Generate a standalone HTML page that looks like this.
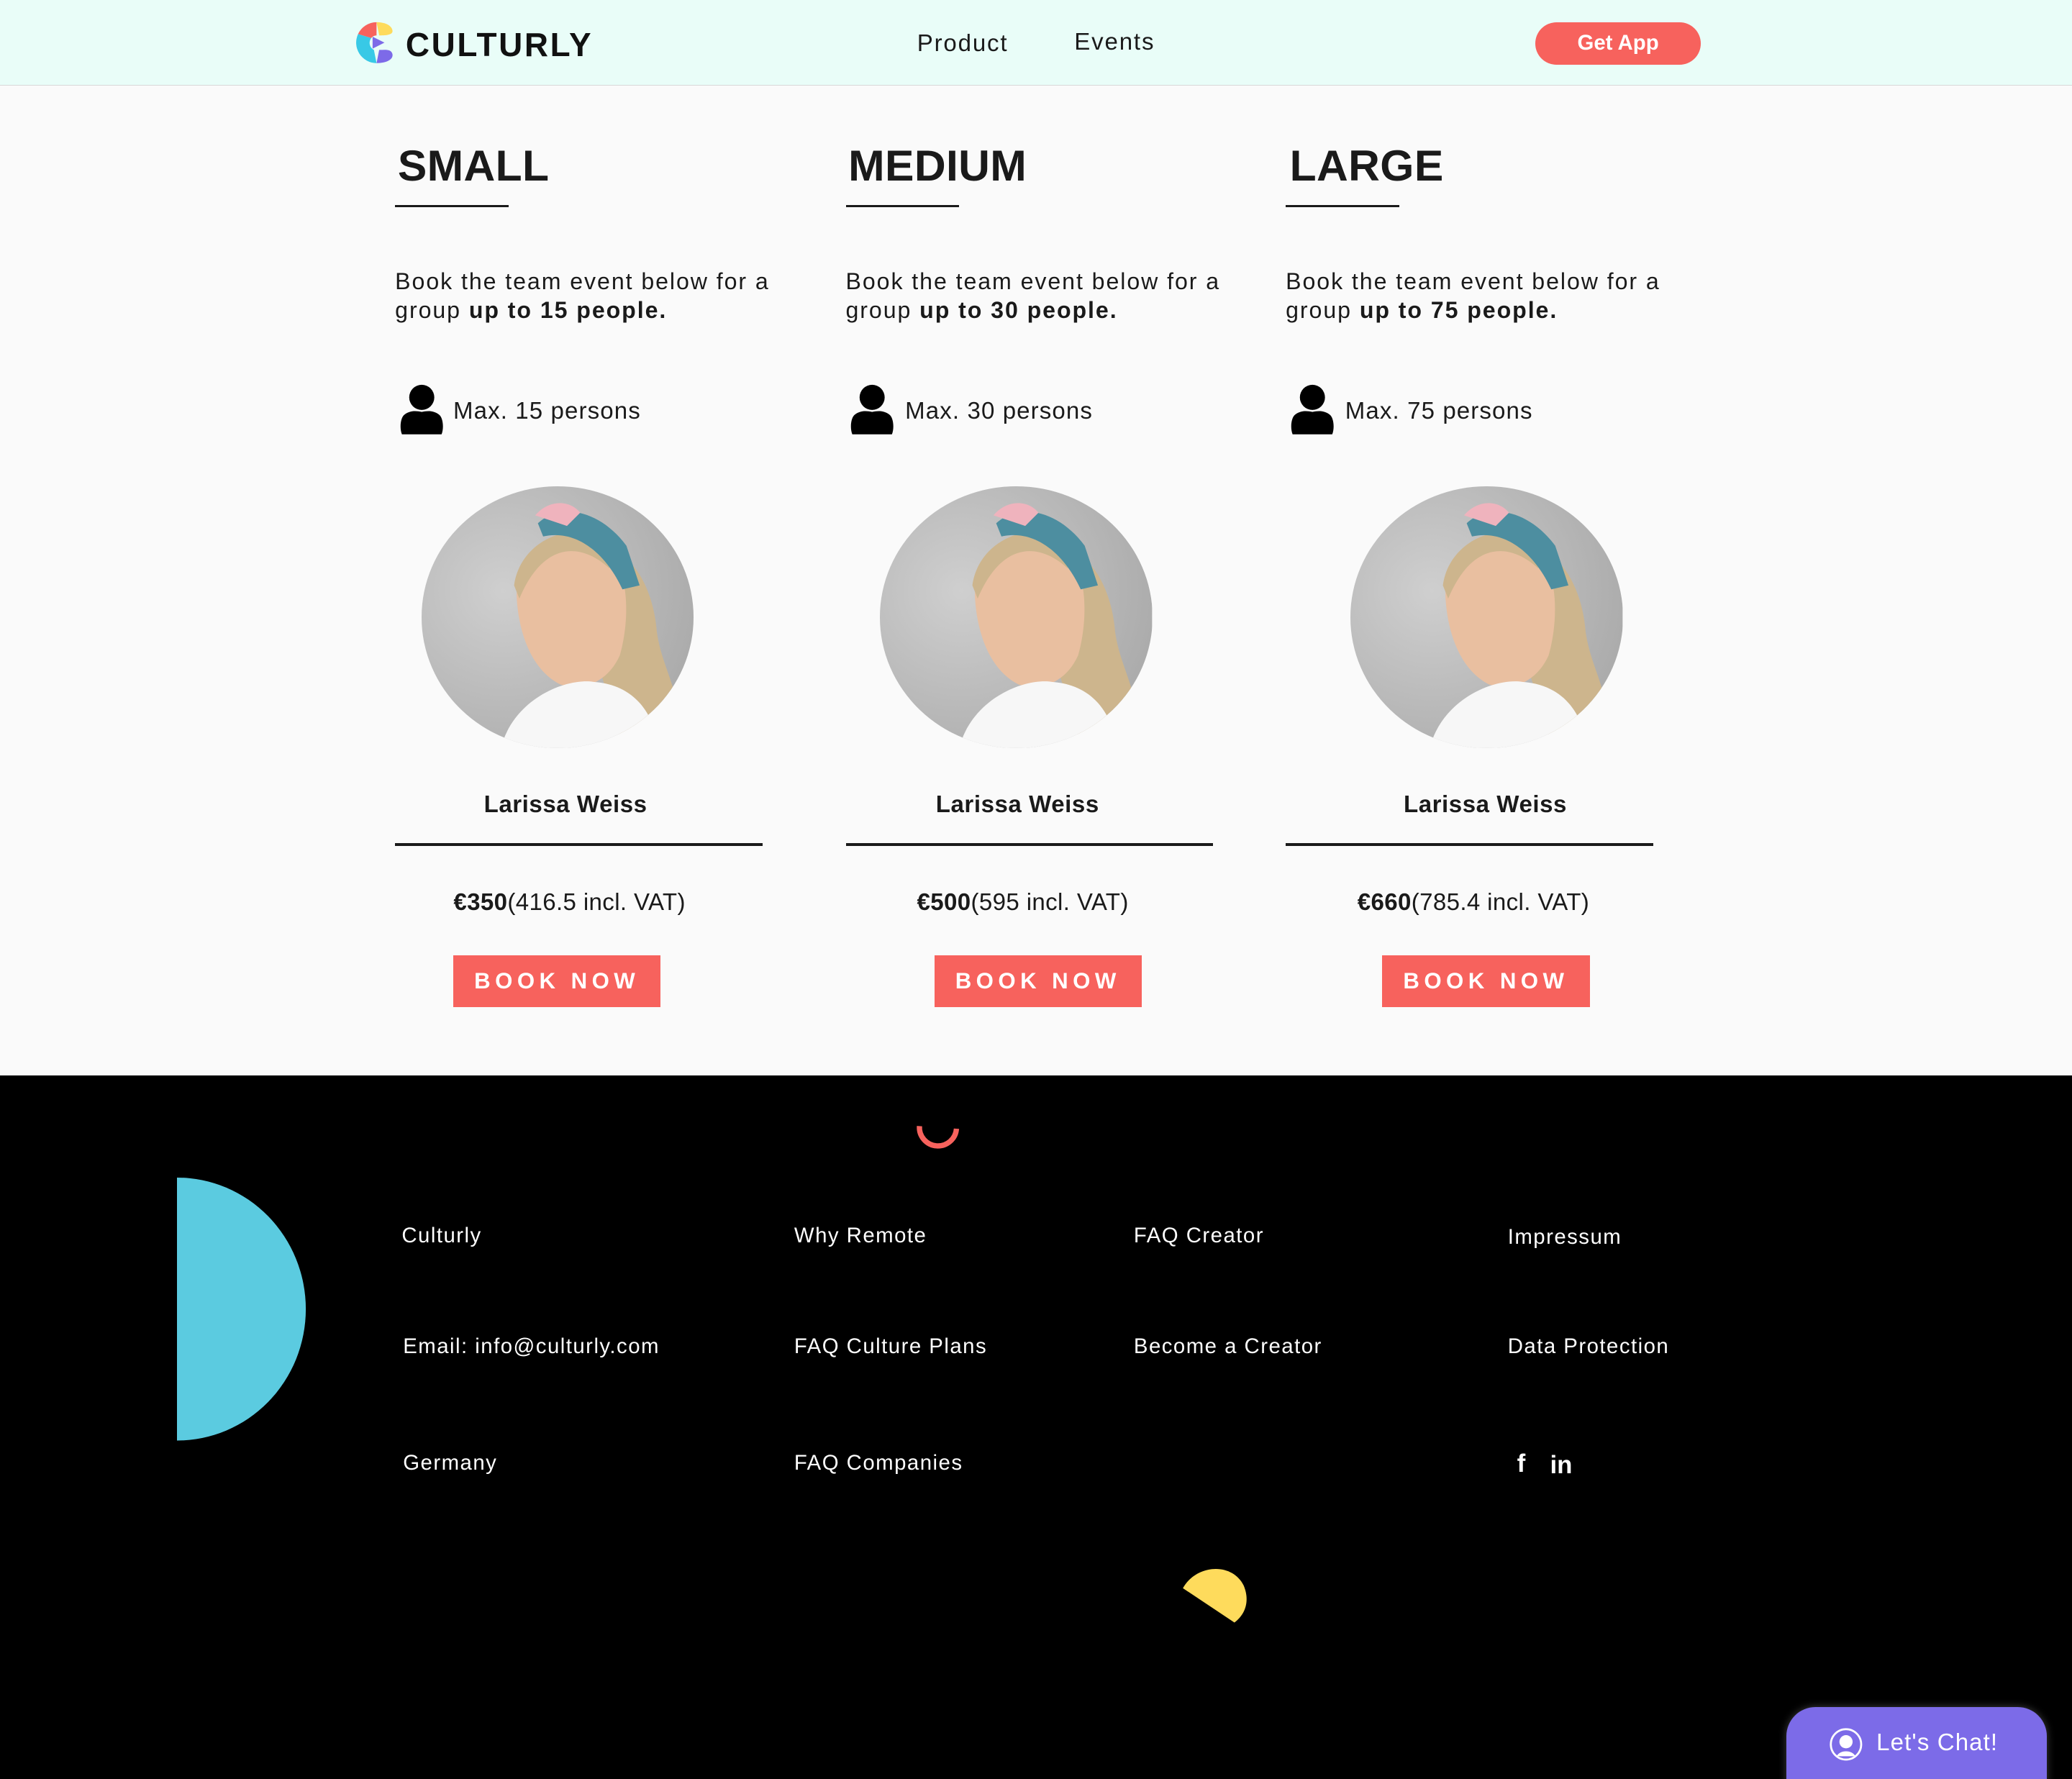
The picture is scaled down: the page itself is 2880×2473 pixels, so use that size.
<!DOCTYPE html>
<html><head><meta charset="utf-8"><style>
*{margin:0;padding:0;box-sizing:border-box}
html,body{width:2880px;height:2473px;overflow:hidden;background:#000}
#w{zoom:1.836735;width:1568px;height:1347px;position:relative;font-family:"Liberation Sans",sans-serif;color:#1a1a1a}
.a{position:absolute;white-space:nowrap}
header{position:absolute;left:0;top:0;width:1568px;height:65px;background:#e9fdf8;border-bottom:1px solid #d8d8d8}
main{position:absolute;left:0;top:65px;width:1568px;height:749px;background:#fafafa}
footer{position:absolute;left:0;top:814px;width:1568px;height:533px;background:#000}
h2{position:absolute;font-size:33px;font-weight:bold;letter-spacing:0.2px}
.ul{position:absolute;height:2px;width:86px;background:#1a1a1a}
.d{position:absolute;font-size:17.5px;line-height:22px;color:#1a1a1a;letter-spacing:1.05px;white-space:nowrap}
.mx{position:absolute;font-size:18px;letter-spacing:0.6px}
.ph{position:absolute;width:206px;height:198px;border-radius:50%;overflow:hidden}
.nm{position:absolute;font-size:18px;font-weight:bold;width:280px;text-align:center;letter-spacing:0.3px}
.ln{position:absolute;height:2px;width:278px;background:#1a1a1a}
.pr{position:absolute;font-size:18px;width:280px;text-align:center;letter-spacing:0.2px}
.bt{position:absolute;width:157px;height:39px;background:#f7625d;color:#fff;font-weight:bold;font-size:17px;letter-spacing:3.5px;text-align:center;line-height:39px}
.f{position:absolute;color:#fff;font-size:16px;white-space:nowrap;letter-spacing:0.8px}
</style></head><body><div id="w">
<header>
<svg class="a" style="left:269px;top:16px" width="32" height="33" viewBox="0 0 32 33">
<path d="M16 1 A15.5 15.5 0 0 0 2 10 L12 13 A5 5 0 0 1 16 11Z" fill="#f7625d"/>
<path d="M16 1 C22 1 27 3 28 7 C29 11 22 11 18 11 Z" fill="#fedb5c"/>
<path d="M2 10 A15.5 15.5 0 0 0 16 32 L14 22 A6 6 0 0 1 12 13Z" fill="#38c9e6"/>
<path d="M16 32 C24 32 29 29 28 25 C27 21 22 22 18 22Z" fill="#7d6ae8"/>
<path d="M13 12 L22 16.5 L13 21Z" fill="#7d6ae8"/>
</svg>
<div class="a" style="left:307px;top:19px;font-size:25px;font-weight:bold;letter-spacing:1.4px;color:#111">CULTURLY</div>
<div class="a" style="left:694px;top:23px;font-size:18px;letter-spacing:1px">Product</div>
<div class="a" style="left:813px;top:22px;font-size:18px;letter-spacing:1px">Events</div>
<div class="a" style="left:1162px;top:17px;width:125px;height:32px;border-radius:16px;background:#f7625d;color:#fff;font-weight:bold;font-size:16px;text-align:center;line-height:32px">Get App</div>
</header>
<main></main>
<svg width="0" height="0" style="position:absolute"><defs>
<radialGradient id="bg" cx="0.3" cy="0.4" r="0.8"><stop offset="0" stop-color="#cfcfcf"/><stop offset="1" stop-color="#a8a8a8"/></radialGradient>
<g id="p">
<rect width="206" height="198" fill="url(#bg)"/>
<path d="M110 50 C150 30 175 70 178 110 C182 140 200 160 190 185 L150 190 C140 150 120 100 110 50Z" fill="#cdb58d"/>
<path d="M72 85 C70 45 105 28 135 42 C158 58 158 100 150 128 C140 150 120 155 105 150 C85 140 74 115 72 85Z" fill="#e9bfa0"/>
<path d="M70 75 C75 38 120 22 150 45 L142 62 C120 42 92 42 74 85Z" fill="#cdb58d"/>
<path d="M88 28 C105 12 135 18 155 45 L165 75 L152 78 C140 52 118 32 92 38Z" fill="#4d8ea0"/>
<path d="M86 22 C96 10 112 10 120 20 L110 30 Z" fill="#efb3bd"/>
<path d="M60 198 C70 160 110 145 130 148 C160 150 175 170 180 198Z" fill="#f7f7f7"/>
</g></defs></svg>

<h2 style="left:301px;top:106px">SMALL</h2><div class="ul" style="left:299px;top:155px"></div>
<h2 style="left:642px;top:106px">MEDIUM</h2><div class="ul" style="left:640px;top:155px"></div>
<h2 style="left:976px;top:106px">LARGE</h2><div class="ul" style="left:973px;top:155px"></div>

<div class="d" style="left:299px;top:202px">Book the team event below for a<br>group <b>up to 15 people.</b></div>
<div class="d" style="left:640px;top:202px">Book the team event below for a<br>group <b>up to 30 people.</b></div>
<div class="d" style="left:973px;top:202px">Book the team event below for a<br>group <b>up to 75 people.</b></div>

<svg class="a" style="left:302px;top:291px" width="34" height="39" viewBox="0 0 34 39"><circle cx="17" cy="10" r="9.5"/><path d="M2 38 C0 33 1 25 4 23 C8 20 12 20 17 21 C22 20 26 20 30 23 C33 25 34 33 32 38Z"/></svg>
<div class="mx" style="left:343px;top:301px">Max. 15 persons</div>
<svg class="a" style="left:643px;top:291px" width="34" height="39" viewBox="0 0 34 39"><circle cx="17" cy="10" r="9.5"/><path d="M2 38 C0 33 1 25 4 23 C8 20 12 20 17 21 C22 20 26 20 30 23 C33 25 34 33 32 38Z"/></svg>
<div class="mx" style="left:685px;top:301px">Max. 30 persons</div>
<svg class="a" style="left:976px;top:291px" width="34" height="39" viewBox="0 0 34 39"><circle cx="17" cy="10" r="9.5"/><path d="M2 38 C0 33 1 25 4 23 C8 20 12 20 17 21 C22 20 26 20 30 23 C33 25 34 33 32 38Z"/></svg>
<div class="mx" style="left:1018px;top:301px">Max. 75 persons</div>

<svg class="ph" style="left:319px;top:368px" viewBox="0 0 206 198"><use href="#p"/></svg>
<svg class="ph" style="left:666px;top:368px" viewBox="0 0 206 198"><use href="#p"/></svg>
<svg class="ph" style="left:1022px;top:368px" viewBox="0 0 206 198"><use href="#p"/></svg>

<div class="nm" style="left:288px;top:599px">Larissa Weiss</div>
<div class="nm" style="left:630px;top:599px">Larissa Weiss</div>
<div class="nm" style="left:984px;top:599px">Larissa Weiss</div>
<div class="ln" style="left:299px;top:638px"></div>
<div class="ln" style="left:640px;top:638px"></div>
<div class="ln" style="left:973px;top:638px"></div>

<div class="pr" style="left:291px;top:673px"><b>€350</b>(416.5 incl. VAT)</div>
<div class="pr" style="left:634px;top:673px"><b>€500</b>(595 incl. VAT)</div>
<div class="pr" style="left:975px;top:673px"><b>€660</b>(785.4 incl. VAT)</div>

<div class="bt" style="left:343px;top:723px">BOOK NOW</div>
<div class="bt" style="left:707px;top:723px">BOOK NOW</div>
<div class="bt" style="left:1046px;top:723px">BOOK NOW</div>

<footer>
<svg class="a" style="left:690px;top:34px" width="40" height="28" viewBox="0 0 40 28"><path d="M6 4 A14 14 0 0 0 34 6" fill="none" stroke="#f7625d" stroke-width="4"/></svg>
<svg class="a" style="left:134px;top:77px" width="100" height="200" viewBox="0 0 100 200"><path d="M0 0 A97 99 0 0 1 0 199Z" fill="#5bcbe0"/></svg>
<svg class="a" style="left:890px;top:368px" width="56" height="50" viewBox="0 0 56 50"><path d="M5 20 C15 2 42 0 51 18 C56 30 52 40 44 46Z" fill="#fedb5c"/></svg>
<div class="f" style="left:304px;top:112px">Culturly</div>
<div class="f" style="left:305px;top:196px">Email: info@culturly.com</div>
<div class="f" style="left:305px;top:284px">Germany</div>
<div class="f" style="left:601px;top:112px">Why Remote</div>
<div class="f" style="left:601px;top:196px">FAQ Culture Plans</div>
<div class="f" style="left:601px;top:284px">FAQ Companies</div>
<div class="f" style="left:858px;top:112px">FAQ Creator</div>
<div class="f" style="left:858px;top:196px">Become a Creator</div>
<div class="f" style="left:1141px;top:113px">Impressum</div>
<div class="f" style="left:1141px;top:196px">Data Protection</div>
<div class="f" style="left:1148px;top:283px;font-weight:bold;font-size:19px">f</div>
<div class="f" style="left:1173px;top:284px;font-weight:bold;font-size:19px;letter-spacing:0">in</div>
<div class="a" style="left:1352px;top:478px;width:197px;height:60px;background:#7c6be8;border-radius:22px 22px 0 0;box-shadow:0 0 6px rgba(255,255,255,.25)"></div>
<svg class="a" style="left:1384px;top:493px" width="26" height="26" viewBox="0 0 26 26"><circle cx="13" cy="13" r="11.5" fill="none" stroke="#fff" stroke-width="1.5"/><circle cx="13" cy="11" r="5" fill="#fff"/><path d="M6 22 C8 17 18 17 20 22Z" fill="#fff"/></svg>
<div class="f" style="left:1420px;top:495px;font-size:18px;letter-spacing:0.6px">Let's Chat!</div>
</footer>
</div></body></html>
